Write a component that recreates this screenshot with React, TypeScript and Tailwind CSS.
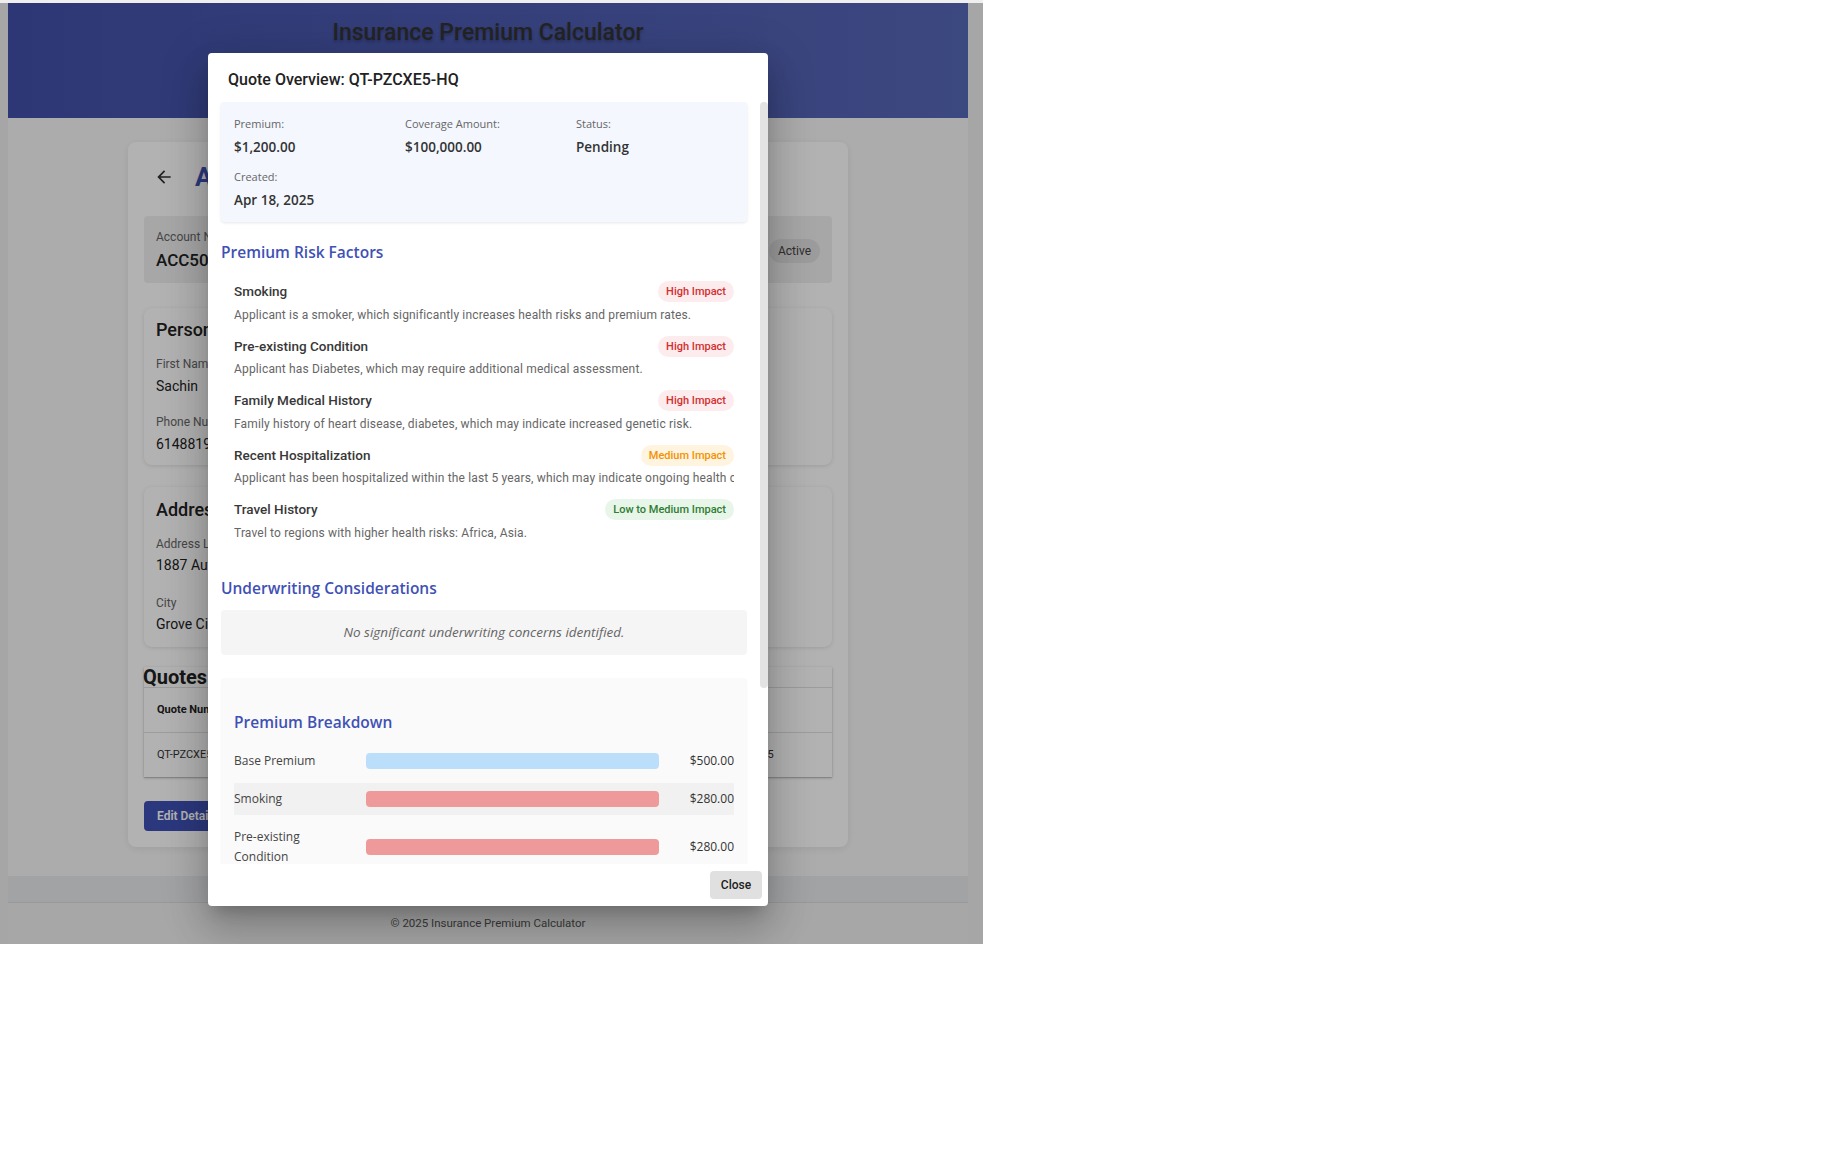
import React from 'react';

type Level = 'high' | 'medium' | 'low';

const risks: { title: string; desc: string; impact: string; level: Level }[] = [
  { title: 'Smoking', desc: 'Applicant is a smoker, which significantly increases health risks and premium rates.', impact: 'High Impact', level: 'high' },
  { title: 'Pre-existing Condition', desc: 'Applicant has Diabetes, which may require additional medical assessment.', impact: 'High Impact', level: 'high' },
  { title: 'Family Medical History', desc: 'Family history of heart disease, diabetes, which may indicate increased genetic risk.', impact: 'High Impact', level: 'high' },
  { title: 'Recent Hospitalization', desc: 'Applicant has been hospitalized within the last 5 years, which may indicate ongoing health conditions.', impact: 'Medium Impact', level: 'medium' },
  { title: 'Travel History', desc: 'Travel to regions with higher health risks: Africa, Asia.', impact: 'Low to Medium Impact', level: 'low' },
];

const badgeStyles: Record<Level, string> = {
  high: 'bg-[#fdecee] text-[#d32f2f]',
  medium: 'bg-[#fff4e0] text-[#f39200]',
  low: 'bg-[#e8f5e9] text-[#2e7d32]',
};

const breakdown = [
  { label: 'Base Premium', amount: '$500.00', bar: 'bg-[#bbdefb]' },
  { label: 'Smoking', amount: '$280.00', bar: 'bg-[#ef9a9a]' },
  { label: 'Pre-existing Condition', amount: '$280.00', bar: 'bg-[#ef9a9a]' },
  { label: 'Family Medical History', amount: '$140.00', bar: 'bg-[#ef9a9a]' },
  { label: 'Recent Hospitalization', amount: '$100.00', bar: 'bg-[#ffcc80]' },
  { label: 'Travel History', amount: '$50.00', bar: 'bg-[#a5d6a7]' },
];

const roboto = "font-['Roboto',sans-serif]";
const open = "font-['Open_Sans',sans-serif]";

function ArrowBack() {
  return (
    <svg viewBox="0 0 24 24" className="w-5 h-5 fill-[#333]">
      <path d="M20 11H7.83l5.59-5.59L12 4l-8 8 8 8 1.41-1.41L7.83 13H20v-2z" />
    </svg>
  );
}

function Field({ label, value, labelMt, valueMt }: { label: string; value: string; labelMt: string; valueMt: string }) {
  return (
    <div>
      <div className={`${labelMt} text-[12px] leading-4 text-[#666]`}>{label}</div>
      <div className={`${valueMt} text-[14px] leading-5 text-[#222]`}>{value}</div>
    </div>
  );
}

function Page() {
  return (
    <div className="flex h-[941px]">
      <div className="w-[8px] bg-[#eeeeee]" />
      <div className="w-[960px] flex flex-col">
        <header className="h-[115px] bg-linear-to-r from-[#4250a8] to-[#5767b8] flex justify-center">
          <h1 className="mt-[14px] h-[32px] text-[23px] leading-[32px] font-medium text-[#333] [text-shadow:0_2px_3px_rgba(0,0,0,0.25)]">
            Insurance Premium Calculator
          </h1>
        </header>
        <main className="bg-[#f7f7f7] pt-[24px] pb-[29px] flex justify-center">
          <div className="w-[720px] bg-white rounded-lg shadow-[0_2px_8px_rgba(0,0,0,0.08)] p-4">
            <div className="h-[38px] flex items-center">
              <button className="w-10 h-10 flex items-center justify-center rounded-full">
                <ArrowBack />
              </button>
              <h2 className="ml-[11px] text-[26px] font-bold text-[#3f51b5]">Account Details</h2>
            </div>

            <div className="mt-[20px] bg-[#f0f0f0] rounded-[4px] h-[67px] px-[12px] flex items-center justify-between">
              <div className="pt-[2px]">
                <div className="text-[12px] leading-4 text-[#666]">Account Number</div>
                <div className="mt-[3px] text-[17px] leading-6 font-medium text-[#222]">ACC5019284</div>
              </div>
              <span className="mt-[2px] h-[24px] w-[51px] rounded-full bg-[#e0e0e0] text-[12px] leading-[24px] text-center text-[#444]">Active</span>
            </div>

            <div className="mt-[25px] bg-white rounded-lg shadow-[0_1px_4px_rgba(0,0,0,0.12)] px-[12px] pt-[13px] pb-[11px]">
              <div className="text-[18px] leading-[18px] font-medium text-[#222]">Personal Information</div>
              <div className="grid grid-cols-2 gap-x-[12px]">
                <Field label="First Name" value="Sachin" labelMt="mt-[17px]" valueMt="mt-[4px]" />
                <Field label="Last Name" value="Tendulkar" labelMt="mt-[17px]" valueMt="mt-[4px]" />
                <Field label="Phone Number" value="6148819203" labelMt="mt-[18px]" valueMt="mt-[4px]" />
                <Field label="Email" value="sachin@example.com" labelMt="mt-[18px]" valueMt="mt-[4px]" />
              </div>
            </div>

            <div className="mt-[22px] bg-white rounded-lg shadow-[0_1px_4px_rgba(0,0,0,0.12)] px-[12px] pt-[14px] pb-[13px]">
              <div className="text-[18px] leading-[18px] font-medium text-[#222]">Address</div>
              <div className="grid grid-cols-2 gap-x-[12px]">
                <Field label="Address Line 1" value="1887 Autumn Lane" labelMt="mt-[17px]" valueMt="mt-[3px]" />
                <Field label="Address Line 2" value="Apt 4" labelMt="mt-[17px]" valueMt="mt-[3px]" />
                <Field label="City" value="Grove City" labelMt="mt-[20px]" valueMt="mt-[3px]" />
                <Field label="State" value="OH" labelMt="mt-[20px]" valueMt="mt-[3px]" />
              </div>
            </div>

            <div className="mt-[20px] bg-white shadow-[0_1px_3px_rgba(0,0,0,0.2),0_1px_1px_rgba(0,0,0,0.14)]">
              <div className="h-[20px] text-[20px] leading-[20px] font-bold text-[#222] -ml-px">Quotes</div>
              <div className="h-[46px] border-t border-b border-[#e0e0e0] flex items-center px-[13px] text-[11px] font-bold text-[#222]">
                <div className="w-[150px]">Quote Number</div>
                <div className="w-[130px]">Premium</div>
                <div className="w-[150px]">Coverage</div>
                <div className="w-[125px]">Status</div>
                <div>Created</div>
              </div>
              <div className="h-[44px] flex items-center px-[13px] text-[11px] text-[#333]">
                <div className="w-[150px]">QT-PZCXE5-HQ</div>
                <div className="w-[130px]">$1,200.00</div>
                <div className="w-[150px]">$100,000.00</div>
                <div className="w-[125px]">Pending</div>
                <div>Apr 18, 2025</div>
              </div>
            </div>

            <button className="mt-[24px] h-[30px] px-[13px] rounded-[4px] bg-[#3f51b5] text-white text-[12px] font-semibold">
              Edit Details
            </button>
          </div>
        </main>
        <div className="h-[26px] bg-[#e9eaed]" />
        <footer className="flex-1 border-t border-[#dcdcdc] bg-[#f0f0f0] flex items-center justify-center text-[11.5px] text-[#555]">
          © 2025 Insurance Premium Calculator
        </footer>
      </div>
      <div className="w-[15px] bg-[#eeeeee]" />
    </div>
  );
}

function Modal() {
  return (
    <div className="absolute left-[208px] top-[50px] w-[560px] h-[853px] bg-white rounded-[4px] flex flex-col overflow-hidden shadow-[0_11px_15px_-7px_rgba(0,0,0,0.2),0_24px_38px_3px_rgba(0,0,0,0.14),0_9px_46px_8px_rgba(0,0,0,0.12)]">
      <div className={`${roboto} px-[20px] pt-[15px] pb-[10px] text-[16px] leading-6 font-medium text-[#222]`}>
        Quote Overview: QT-PZCXE5-HQ
      </div>

      <div className="flex-1 min-h-0 flex">
        <div className="flex-1 min-w-0 overflow-hidden pl-[13px] pr-[13px]">
          <div className={`${open} bg-[#f4f7fe] rounded-[4px] shadow-[0_1px_3px_rgba(0,0,0,0.1)] h-[120px] px-[13px] pt-[14px]`}>
            <div className="grid grid-cols-[171px_171px_171px] gap-y-[12px]">
              {[
                ['Premium:', '$1,200.00'],
                ['Coverage Amount:', '$100,000.00'],
                ['Status:', 'Pending'],
                ['Created:', 'Apr 18, 2025'],
              ].map(([l, v]) => (
                <div key={l}>
                  <div className="text-[11px] leading-4 text-[#666]">{l}</div>
                  <div className="mt-[5px] text-[13.5px] leading-5 font-semibold text-[#333]">{v}</div>
                </div>
              ))}
            </div>
          </div>

          <h3 className={`${open} mt-[18px] text-[15.5px] leading-6 font-semibold text-[#3f51b5]`}>Premium Risk Factors</h3>
          <div className={`${roboto} mt-[11px]`}>
            {risks.map((r) => (
              <div key={r.title} className="px-[13px] py-[6px]">
                <div className="flex items-center justify-between h-[21px]">
                  <span className="text-[13.5px] font-medium text-[#383838]">{r.title}</span>
                  <span className={`h-[21px] px-[8px] rounded-full text-[11px] font-medium leading-[21px] ${badgeStyles[r.level]}`}>
                    {r.impact}
                  </span>
                </div>
                <div className="mt-[3.5px] text-[12px] tracking-[0.16px] leading-[18px] text-[#666] whitespace-nowrap overflow-hidden">{r.desc}</div>
              </div>
            ))}
          </div>

          <h3 className={`${open} mt-[28.5px] text-[15.5px] leading-6 font-semibold text-[#3f51b5]`}>Underwriting Considerations</h3>
          <div className={`${open} mt-[10px] h-[45px] rounded-[4px] bg-[#f5f5f5] flex items-center justify-center text-[13.5px] italic text-[#666]`}>
            No significant underwriting concerns identified.
          </div>

          <div className={`${open} mt-[23px] mb-[10px] bg-[#fafafa] rounded-[4px] shadow-[0_1px_2px_rgba(0,0,0,0.06)] px-[13px] pt-[32px] pb-[16px]`}>
            <h3 className="text-[15.5px] leading-6 font-semibold text-[#3f51b5]">Premium Breakdown</h3>
            <div className="mt-[11px]">
              {breakdown.map((b, i) => (
                <div key={b.label} className={`flex items-center py-[6px] mb-[6px] ${i % 2 === 1 ? 'bg-[#f1f1f1]' : ''}`}>
                  <div className="w-[120px] text-[12px] leading-5 text-[#444]">{b.label}</div>
                  <div className="flex-1 mx-[12px]">
                    <div className={`h-[16px] rounded-[4px] ${b.bar}`} style={{ width: '100%' }} />
                  </div>
                  <div className="w-[63px] text-right text-[12px] leading-5 text-[#333]">{b.amount}</div>
                </div>
              ))}
              <div className="border-t border-[#e0e0e0] pt-[10px] flex justify-between text-[14px] leading-6 font-semibold text-[#333]">
                <span>Total Premium</span>
                <span>$1,200.00</span>
              </div>
            </div>
          </div>
        </div>
        {/* scrollbar */}
        <div className="w-[8px]">
          <div className="h-[586px] rounded-[4px] bg-[#e3e3e3]" />
        </div>
      </div>

      <div className="flex justify-end pt-[7px] pb-[7px] pr-[6px]">
        <button className={`${roboto} h-[28px] w-[52px] rounded-[4px] bg-[#e0e0e0] text-[12px] font-medium text-[#212121]`}>
          Close
        </button>
      </div>
    </div>
  );
}

export default function App() {
  return (
    <div className={`${roboto} min-h-screen bg-white`}>
      <div className="w-[983px]">
        <div className="h-[3px] bg-[#efefef]" />
        <div className="relative overflow-hidden">
          <Page />
          <div className="absolute inset-0 bg-black/30" />
          <Modal />
        </div>
      </div>
    </div>
  );
}
